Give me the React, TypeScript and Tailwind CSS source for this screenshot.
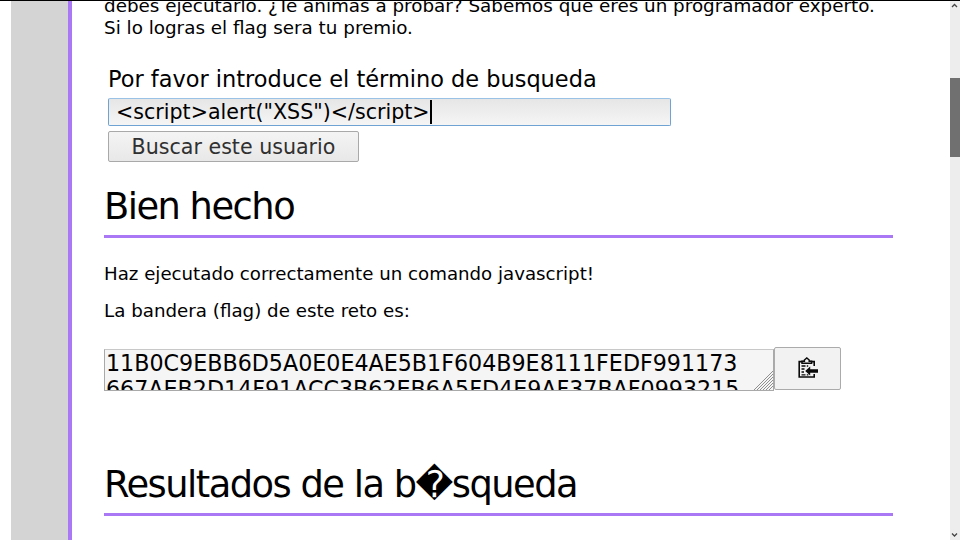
import React from "react";

function ClipboardImport() {
  return (
    <svg width="20" height="22" viewBox="0 0 20 22" fill="none" stroke="#0a0a0a" strokeWidth="1.6">
      <path d="M16.2 9V4.6H1.2V20H16.2v-3" />
      <path d="M4 6.2V4.2h2.4V3L8.8 1l2.4 2v1.2h2.4v2z" fill="#f2f2f2" strokeWidth="1.5" />
      <path d="M3.5 9h4M8.8 9h1.4M3.5 12h3M3.5 15h2.5M3.5 17.8h4M8.8 17.8h1.6" strokeWidth="1.3" />
      <path d="M7.2 14l5-4.4v2.7H20v3.4h-7.8v2.7z" fill="#0a0a0a" stroke="none" />
    </svg>
  );
}

function Heading({ children }: { children: React.ReactNode }) {
  return (
    <h1 className="h-[54px] w-[788.5px] border-b-[3px] border-[#ab78f5] pb-[6px] text-[36.8px] leading-[45px] tracking-[-1.5px] whitespace-nowrap">
      {children}
    </h1>
  );
}

export default function App() {
  return (
    <div className="flex h-[540px] w-[960px] overflow-hidden border-t border-black bg-white font-['DejaVu_Sans',sans-serif] text-black">
      <aside className="ml-[11px] h-full w-[61px] shrink-0 border-r-[4px] border-[#ab78f5] bg-[#d4d4d4]" />
      <main className="flex h-full w-[878px] shrink-0 flex-col overflow-hidden pl-[32px]">
        <p className="mt-[-6px] shrink-0 text-[18.33px] leading-[22px] whitespace-nowrap">
          debes ejecutarlo. ¿Te animas a probar? Sabemos que eres un programador experto.
          <br />
          Si lo logras el flag sera tu premio.
        </p>
        <form className="mt-[26px] flex shrink-0 flex-col items-start pl-[4px]">
          <label className="h-[33px] text-[22.45px] leading-[28px] whitespace-nowrap">Por favor introduce el término de busqueda</label>
          <div className="flex h-[28px] w-[563px] items-center rounded-[2px] border border-[#6fa3d3] border-t-[#9ac2e6] bg-linear-to-b from-[#e6e6e6] to-[#f5f5f5] pl-[7px] text-[20.6px] leading-[26px]">
            <span>{'<script>alert("XSS")</script>'}</span>
            <span className="h-[24px] w-[2px] bg-black" />
          </div>
          <button type="button" className="mt-[5px] h-[31px] w-[251px] rounded-[2px] border border-[#a9a9a9] bg-linear-to-b from-[#f4f4f4] to-[#e8e8e8] pt-[1px] text-[20.6px] leading-[28px] whitespace-nowrap text-[#303030]">
            Buscar este usuario
          </button>
        </form>
        <section className="mt-[22px] shrink-0">
          <Heading>Bien hecho</Heading>
          <p className="mt-[24px] text-[18.2px] leading-[23px]">Haz ejecutado correctamente un comando javascript!</p>
          <p className="mt-[14px] text-[18.25px] leading-[23px]">La bandera (flag) de este reto es:</p>
          <div className="mt-[25px] flex h-[44px] items-start">
            <div className="mt-[2px] flex h-[42px] w-[670px] justify-between overflow-hidden border border-[#a9a9a9] border-t-[#c8c8c8] bg-[#f5f5f5]">
              <div className="pl-[1px] text-[22.2px] leading-[26px] whitespace-nowrap">
                <div>11B0C9EBB6D5A0E0E4AE5B1F604B9E8111FEDF991173</div>
                <div>667AEB2D14F91ACC3B62EB6A5FD4E9AF37BAF0993215</div>
              </div>
              <svg className="mt-[20px] shrink-0" width="20" height="20" stroke="#8f8f8f" strokeWidth="1">
                <path d="M1 20L20 1M4 20L20 4M7 20L20 7M10 20L20 10M13 20L20 13M16 20L20 16" />
              </svg>
            </div>
            <button type="button" className="flex h-[43px] w-[67px] items-center justify-center rounded-[2px] border border-[#ababab] bg-[#f2f2f2] pb-[1px]">
              <ClipboardImport />
            </button>
          </div>
        </section>
        <section className="mt-[71px] shrink-0">
          <Heading>Resultados de la b�squeda</Heading>
        </section>
      </main>
      <div className="flex h-full w-[10px] shrink-0 flex-col bg-[#ededed]">
        <svg width="10" height="77" fill="none" stroke="#444" strokeWidth="1.3">
          <path d="M2 6L4.5 3.5L7 6" />
        </svg>
        <div className="h-[79px] w-full bg-[#707070]" />
        <svg className="mt-auto" width="10" height="10" fill="none" stroke="#444" strokeWidth="1.3">
          <path d="M2 3.5L4.5 6L7 3.5" />
        </svg>
      </div>
    </div>
  );
}
